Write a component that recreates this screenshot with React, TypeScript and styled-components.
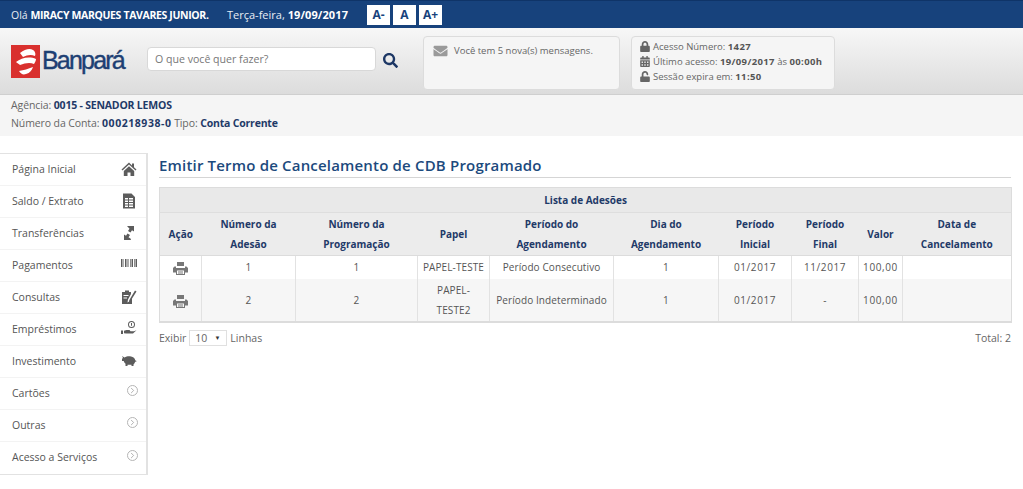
import React from "react";
import styled, { createGlobalStyle } from "styled-components";
import { FaSearch, FaLock, FaUnlock, FaCalendarAlt, FaEnvelope } from "react-icons/fa";
import { FiChevronRight } from "react-icons/fi";

const GlobalStyle = createGlobalStyle`
  html, body { margin: 0; padding: 0; background: #fff; }
  body { font-family: "Open Sans", sans-serif; font-size: 10.5px; color: #555; overflow: hidden; }
  * { box-sizing: border-box; }
`;

const TopBar = styled.div`
  height: 28px;
  background: #17427c;
  border-top: 1px solid #0f3468;
  display: flex;
  align-items: center;
  padding-left: 11px;
  color: #e8edf4;
`;
const Hello = styled.span`
  font-size: 10.5px;
  width: 216px;
  b { font-weight: 700; color: #fff; letter-spacing: -0.35px; }
`;
const DateText = styled.span`
  font-size: 11px;
  width: 141px;
  white-space: nowrap;
  margin-right: -1px;
  b { font-weight: 700; color: #fff; letter-spacing: 0.1px; }
`;
const FontButton = styled.button`
  width: 23px;
  height: 20px;
  margin-right: 3px;
  border: 0;
  padding: 0;
  background: #fff;
  color: #17427c;
  font: 700 12px "Open Sans", sans-serif;
`;
const Header = styled.div`
  height: 67px;
  background: linear-gradient(#f7f7f7, #dcdcdc);
  border-bottom: 1px solid #cfcfcf;
  display: flex;
  align-items: flex-start;
  padding-left: 11px;
`;
const Logo = styled.div`
  width: 136px;
  margin-top: 17px;
  display: flex;
  align-items: center;
  height: 33px;
`;
const LogoText = styled.span`
  font: 400 25px "Liberation Sans", sans-serif;
  color: #1d3f73;
  letter-spacing: -1.8px;
  margin: 0 0 3px 2px;
  -webkit-text-stroke: 0.4px #1d3f73;
`;
const Search = styled.div`
  width: 229px;
  height: 24px;
  margin-top: 19px;
  background: #fff;
  border: 1px solid #d8d8d8;
  border-radius: 4px;
  padding-left: 7px;
  display: flex;
  align-items: center;
  font-size: 10.6px;
  color: #777;
`;
const SearchIcon = styled(FaSearch)`
  width: 15px;
  height: 15px;
  color: #1d3765;
  margin: 25px 25px 0 7px;
`;
const Panel = styled.div<{ $w: number }>`
  width: ${(p) => p.$w}px;
  height: 54px;
  margin-top: 8px;
  margin-right: 11px;
  background: #f5f5f5;
  border: 1px solid #dcdcdc;
  border-radius: 4px;
  color: #666;
`;
const MessagePanel = styled(Panel)`
  display: flex;
  gap: 6px;
  padding: 7px 0 0 9px;
  font-size: 9.5px;
  line-height: 14px;
`;
const AccessPanel = styled(Panel)`
  padding: 2px 0 0 8px;
  font-size: 9.5px;
  line-height: 15px;
  b { color: #555; letter-spacing: 0.35px; }
`;
const AccessRow = styled.div`
  display: flex;
  align-items: center;
  gap: 3px;
  white-space: pre;
  svg { width: 10px; height: 11px; color: #666; flex: none; }
`;
const MailIcon = styled(FaEnvelope)`
  width: 15px;
  height: 14px;
  color: #9a9a9a;
  flex: none;
`;
const Account = styled.div`
  height: 41px;
  background: #f5f5f5;
  padding: 2px 0 0 11px;
  font-size: 10.5px;
  line-height: 17.5px;
  letter-spacing: -0.1px;
  color: #666;
`;
const AccountValue = styled.b<{ $digits?: boolean }>`
  color: #1f3a68;
  font-weight: 700;
  letter-spacing: ${(p) => (p.$digits ? "0.55px" : "-0.2px")};
`;
const Body = styled.div`
  display: flex;
  align-items: flex-start;
  padding-top: 17px;
`;
const Sidebar = styled.nav`
  width: 148px;
  flex: none;
  background: #fff;
  border: 1px solid #e2e2e2;
  border-left: 0;
  border-right-width: 2px;
`;
const MenuItem = styled.div`
  height: 32px;
  display: flex;
  align-items: center;
  justify-content: space-between;
  padding: 0 9px 2px 12px;
  border-bottom: 1px solid #f3f3f3;
  color: #555;
  font-size: 10.5px;
  &:last-child { border-bottom: 0; }
`;
const MenuIcon = styled.svg`
  width: 16px;
  height: 16px;
  fill: #5c5c5c;
  flex: none;
`;
const Circle = styled.span`
  width: 11px;
  height: 11px;
  margin: 0 -1px 4px 0;
  border: 1px solid #b5b5b5;
  border-radius: 50%;
  display: flex;
  align-items: center;
  justify-content: center;
  svg { width: 9px; height: 9px; color: #999; }
`;
const Main = styled.main`
  flex: 1;
  padding: 0 12px 0 11px;
  min-width: 0;
`;
const Title = styled.h1`
  margin: 0;
  height: 25px;
  font-size: 15px;
  line-height: 25px;
  font-weight: 600;
  letter-spacing: 0.18px;
  color: #1c4a7d;
  border-bottom: 1px solid #d5d5d5;
`;
const Table = styled.table`
  margin-top: 9px;
  width: 852px;
  table-layout: fixed;
  border-collapse: collapse;
  border: 1px solid #dcdcdc;
  border-bottom-width: 2px;
  font-size: 10px;
  letter-spacing: 0.1px;
  text-align: center;
  color: #555;
`;
const Caption = styled.th`
  height: 25px;
  background: #e9e9e9;
  color: #1f3a68;
  font-size: 10px;
  letter-spacing: 0;
  border-bottom: 1px solid #dedede;
`;
const HeadCell = styled.th`
  height: 43px;
  padding: 0;
  background: #ececec;
  color: #1f3a68;
  font-size: 10px;
  letter-spacing: 0;
  line-height: 20px;
  font-weight: 700;
  border-bottom: 1px solid #dcdcdc;
`;
const Row = styled.tr<{ $alt?: boolean }>`
  background: ${(p) => (p.$alt ? "#f6f6f6" : "#fff")};
`;
const Cell = styled.td<{ $tall?: boolean; $num?: boolean }>`
  padding: 0;
  line-height: 20px;
  height: ${(p) => (p.$tall ? 43 : 23)}px;
  letter-spacing: ${(p) => (p.$num ? "0.6px" : "inherit")};
  border-right: 1px solid #e2e2e2;
  &:last-child { border-right: 0; }
`;
const Printer = styled.svg`
  width: 15px;
  height: 13px;
  fill: #777;
  display: block;
  margin: 3px auto 0;
`;
const Footer = styled.div`
  display: flex;
  justify-content: space-between;
  align-items: center;
  margin-top: 5px;
  height: 20px;
  color: #666;
`;
const PageSize = styled.div`
  display: flex;
  align-items: center;
  gap: 3px;
`;
const Select = styled.span`
  width: 38px;
  height: 16px;
  border: 1px solid #e0e0e0;
  padding: 0 6px 0 5px;
  display: flex;
  align-items: center;
  justify-content: space-between;
  &::after { content: "▼"; font-size: 6px; color: #333; }
`;

const LogoMark = () => (
  <svg width="29" height="33" viewBox="0 0 29 33">
    <rect width="29" height="33" fill="#d9302e" />
    <path d="M9 8c5-4 10-5 13-3 2 1 3 4 2 6-4-2-8-1-12 1-1-1-2-3-3-4zM5 17c5-4 13-6 20-3 0 2-1 3-2 5-4-2-9-1-14 1-1-1-3-2-4-3zM8 26c5-1 9-2 14-4-1 3-3 6-7 7-3 1-5 0-7-3z" fill="#fff" />
  </svg>
);

const HomeIcon = () => (
  <MenuIcon viewBox="0 0 16 16"><path d="M8 1.500 0.500 8.500 1.500 9.500 8 3.500l6.500 6 1-1-2.500-2.300V2.500h-2v1.900zM2.800 10v5h3.700v-3.500h3V15h3.700v-5L8 5.200z" /></MenuIcon>
);
const StatementIcon = () => (
  <MenuIcon viewBox="0 0 16 16"><path fillRule="evenodd" d="M2 0.500h8.500L14 4v11.500H2zM4 5v1.500h3V5zm4 0v1.500h4V5zM4 7.500V9h3V7.500zm4 0V9h4V7.500zM4 10v1.500h3V10zm4 0v1.500h4V10zM4 12.500V14h3v-1.500zm4 0V14h4v-1.500z" /></MenuIcon>
);
const TransferIcon = () => (
  <MenuIcon viewBox="0 0 16 16"><path d="M6 1h7v5.500l-2-1.200-1.500 2.200-2.500-1.500 1.500-2.200zM3 9.500l2 1.200L6.500 8.500 9 10l-1.500 2.200L9.500 13.500 10 15H3z" /></MenuIcon>
);
const BarcodeIcon = () => (
  <MenuIcon viewBox="0 0 16 16"><path d="M0 2h1.500v8H0zm2.500 0H3v8h-.5zM4 2h1.500v8H4zm2.500 0h1v8h-1zM9 2h.7v8H9zm1.500 0H12v8h-1.500zm2.500 0h.7v8H13zm1.500 0H16v8h-1.500z" /></MenuIcon>
);
const ClipboardIcon = () => (
  <MenuIcon viewBox="0 0 16 16"><path d="M4 1.500h4V3h2v2L7 10.500 6.500 13.500 9 12l2-3.500V15H1V3h3zM2.500 6v1h5V6zm0 2.500v1h3.500v-1zM14 1.500l1.500 1L9.500 12 8 13l.2-1.800z" /></MenuIcon>
);
const LoanIcon = () => (
  <MenuIcon viewBox="0 0 16 16"><path fillRule="evenodd" d="M10.500 0a3.500 3.500 0 1 1 0 7 3.500 3.500 0 0 1 0-7zm0 1a2.500 2.500 0 1 0 0 5 2.500 2.500 0 0 0 0-5zM10 2h1v2.800h-1zM0 9.500h2v3.500H0zm3 .2 2.500-.7h3l1 1.300h3.500L15.500 9.200 12 12.500H5l-2-.3z" /></MenuIcon>
);
const PigIcon = () => (
  <MenuIcon viewBox="0 0 16 16"><path d="M1 3 3.500 4.500C5 3.500 7 3 9 3.200c2.800.2 5 1.800 5.300 4.300.8 0 1.200.5 1.200 1l-1.300.3c-.3 1.200-1 2-1.700 2.700V13h-2v-1.300H6.500V13h-2v-2.200C3.500 10 3 9 2.700 8H1V5.700l1-.7z" /></MenuIcon>
);
const PrinterIcon = () => (
  <Printer viewBox="0 0 15 13"><path fillRule="evenodd" d="M4 0h7v4H4zM1.500 4.500H3V6h9V4.500h1.500L15 6v4.500h-3V13H3v-2.500H0V6zM4 8.500V12h7V8.500zM5 9.500h5v.8H5zM5 10.800h5v.6H5z" /></Printer>
);

const menu: [string, React.ReactNode][] = [
  ["Página Inicial", <HomeIcon />],
  ["Saldo / Extrato", <StatementIcon />],
  ["Transferências", <TransferIcon />],
  ["Pagamentos", <BarcodeIcon />],
  ["Consultas", <ClipboardIcon />],
  ["Empréstimos", <LoanIcon />],
  ["Investimento", <PigIcon />],
  ["Cartões", <Circle><FiChevronRight /></Circle>],
  ["Outras", <Circle><FiChevronRight /></Circle>],
  ["Acesso a Serviços", <Circle><FiChevronRight /></Circle>],
];

const colWidths = [42, 94, 122, 72, 124, 105, 73, 67, 44, 109];

const heads: React.ReactNode[] = [
  "Ação",
  <>Número da<br />Adesão</>,
  <>Número da<br />Programação</>,
  "Papel",
  <>Período do<br />Agendamento</>,
  <>Dia do<br />Agendamento</>,
  <>Período<br />Inicial</>,
  <>Período<br />Final</>,
  "Valor",
  <>Data de<br />Cancelamento</>,
];

export default function App() {
  return (
    <>
      <GlobalStyle />
      <TopBar>
        <Hello>Olá <b>MIRACY MARQUES TAVARES JUNIOR.</b></Hello>
        <DateText>Terça-feira, <b>19/09/2017</b></DateText>
        <FontButton>A-</FontButton>
        <FontButton>A</FontButton>
        <FontButton>A+</FontButton>
      </TopBar>
      <Header>
        <Logo><LogoMark /><LogoText>Banpará</LogoText></Logo>
        <Search>O que você quer fazer?</Search>
        <SearchIcon />
        <MessagePanel $w={197}>
          <MailIcon />
          <span>Você tem 5 nova(s) mensagens.</span>
        </MessagePanel>
        <AccessPanel $w={204}>
          <AccessRow><FaLock /><span>Acesso Número: <b>1427</b></span></AccessRow>
          <AccessRow><FaCalendarAlt /><span>Último acesso: <b>19/09/2017</b> às <b>00:00h</b></span></AccessRow>
          <AccessRow><FaUnlock /><span>Sessão expira em: <b>11:50</b></span></AccessRow>
        </AccessPanel>
      </Header>
      <Account>
        <div>Agência: <AccountValue>0015 - SENADOR LEMOS</AccountValue></div>
        <div>Número da Conta: <AccountValue $digits>000218938-0</AccountValue> Tipo: <AccountValue>Conta Corrente</AccountValue></div>
      </Account>
      <Body>
        <Sidebar>
          {menu.map(([label, icon]) => (
            <MenuItem key={label}>{label}{icon}</MenuItem>
          ))}
        </Sidebar>
        <Main>
          <Title>Emitir Termo de Cancelamento de CDB Programado</Title>
          <Table>
            <colgroup>
              {colWidths.map((w, i) => <col key={i} style={{ width: w }} />)}
            </colgroup>
            <thead>
              <tr><Caption colSpan={10}>Lista de Adesões</Caption></tr>
              <tr>{heads.map((h, i) => <HeadCell key={i}>{h}</HeadCell>)}</tr>
            </thead>
            <tbody>
              <Row>
                <Cell><PrinterIcon /></Cell><Cell>1</Cell><Cell>1</Cell><Cell>PAPEL-TESTE</Cell>
                <Cell>Período Consecutivo</Cell><Cell>1</Cell><Cell $num>01/2017</Cell><Cell $num>11/2017</Cell><Cell $num>100,00</Cell><Cell />
              </Row>
              <Row $alt>
                <Cell $tall><PrinterIcon /></Cell><Cell>2</Cell><Cell>2</Cell><Cell>PAPEL-<br />TESTE2</Cell>
                <Cell>Período Indeterminado</Cell><Cell>1</Cell><Cell $num>01/2017</Cell><Cell>-</Cell><Cell $num>100,00</Cell><Cell />
              </Row>
            </tbody>
          </Table>
          <Footer>
            <PageSize>Exibir <Select>10</Select> Linhas</PageSize>
            <span>Total: 2</span>
          </Footer>
        </Main>
      </Body>
    </>
  );
}
